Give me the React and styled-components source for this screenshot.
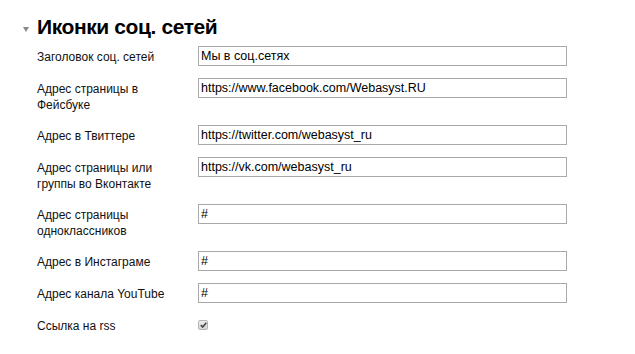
import React from "react";
import styled, { createGlobalStyle } from "styled-components";

const GlobalStyle = createGlobalStyle`
  html, body {
    margin: 0;
    background: #fff;
    font-family: "Liberation Sans", Arial, sans-serif;
    color: #000;
  }
`;

const Section = styled.section`
  padding: 15px 0 0 23px;
`;

const Header = styled.div`
  display: flex;
  align-items: center;
  gap: 8px;
  margin-bottom: 7px;
`;

const Caret = styled.span`
  width: 0;
  height: 0;
  border-left: 3.5px solid transparent;
  border-right: 3.5px solid transparent;
  border-top: 5px solid #888;
  margin-top: 4px;
`;

const Title = styled.h1`
  margin: 0;
  font-size: 21px;
  line-height: 24px;
  letter-spacing: -0.4px;
  font-weight: bold;
`;

const Fields = styled.div`
  display: flex;
  flex-direction: column;
  gap: 12px;
  padding-left: 14px;
`;

const Row = styled.div`
  display: grid;
  grid-template-columns: 161px 369px;
  align-items: start;
`;

const Label = styled.label`
  padding-top: 4px;
  font-size: 12px;
  line-height: 15.5px;
  color: #111;
  max-width: 140px;
`;

const Input = styled.input`
  box-sizing: border-box;
  width: 369px;
  height: 20px;
  margin: 0;
  padding: 0 2px;
  border: 1px solid #a9a9a9;
  font-family: "Liberation Sans", Arial, sans-serif;
  font-size: 12.5px;
  color: #000;
  outline: none;
`;

const Check = styled.span`
  box-sizing: border-box;
  margin-top: 5px;
  width: 10px;
  height: 10px;
  border: 1px solid #b5b5b5;
  border-radius: 2px;
  background: linear-gradient(#eee, #d6d6d6);
  display: flex;
  align-items: center;
  justify-content: center;
`;

const fields = [
  { label: "Заголовок соц. сетей", value: "Мы в соц.сетях" },
  { label: "Адрес страницы в Фейсбуке", value: "https://www.facebook.com/Webasyst.RU" },
  { label: "Адрес в Твиттере", value: "https://twitter.com/webasyst_ru" },
  { label: "Адрес страницы или группы во Вконтакте", value: "https://vk.com/webasyst_ru" },
  { label: "Адрес страницы одноклассников", value: "#" },
  { label: "Адрес в Инстаграме", value: "#" },
  { label: "Адрес канала YouTube", value: "#" },
];

export default function App() {
  return (
    <>
      <GlobalStyle />
      <Section>
        <Header>
          <Caret />
          <Title>Иконки соц. сетей</Title>
        </Header>
        <Fields>
          {fields.map((f) => (
            <Row key={f.label}>
              <Label>{f.label}</Label>
              <Input defaultValue={f.value} />
            </Row>
          ))}
          <Row>
            <Label>Ссылка на rss</Label>
            <Check>
              <svg width="7" height="6" viewBox="0 0 7 6">
                <path d="M0.8 3.2 L2.7 5 L6.3 0.8" fill="none" stroke="#444" strokeWidth="1.6" />
              </svg>
            </Check>
          </Row>
        </Fields>
      </Section>
    </>
  );
}
